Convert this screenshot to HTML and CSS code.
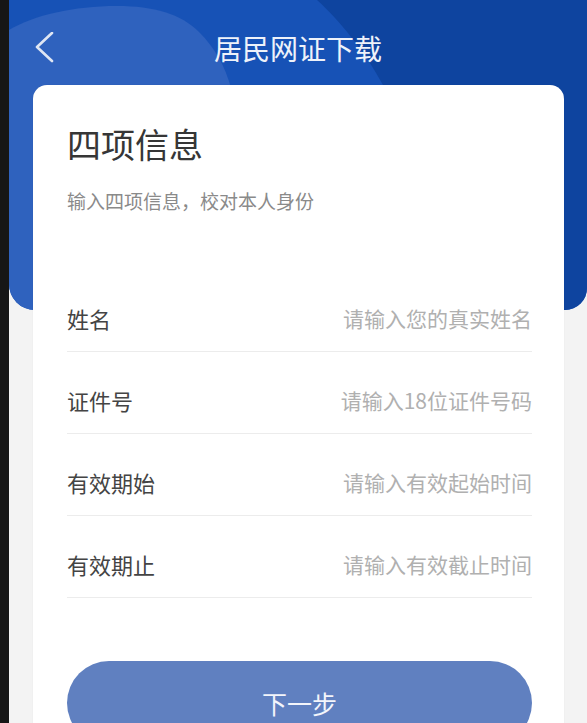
FILE: index.html
```html
<!DOCTYPE html>
<html lang="zh-CN">
<head>
<meta charset="utf-8">
<title>居民网证下载</title>
<link rel="stylesheet" href="styles.css">
</head>
<body>
<div class="device">
  <div class="bezel"></div>
  <div class="screen">
    <header class="header">
      <svg class="header-bg" viewBox="0 0 578 310" preserveAspectRatio="none" aria-hidden="true">
        <rect x="0" y="0" width="578" height="310" fill="#1752b6"/>
        <path d="M308 0 C330 20 355 50 374 85 L420 310 L578 310 L578 0 Z" fill="#0e449f"/>
        <path d="M0 30 C25 15 65 6 108 6 C145 6 172 14 190 32 C206 48 216 66 222 88 L230 310 L0 310 Z" fill="#2f62be"/>
      </svg>
      <nav class="nav">
        <button class="back" aria-label="返回">
          <svg width="20" height="32" viewBox="0 0 20 32"><path d="M17 1 L2 15 L17 29" fill="none" stroke="#dfe6f3" stroke-width="2.6" stroke-linecap="round" stroke-linejoin="round"/></svg>
        </button>
        <h1 class="nav-title">居民网证下载</h1>
        <span class="nav-spacer"></span>
      </nav>
    </header>
    <main class="card">
      <h2 class="card-title">四项信息</h2>
      <p class="card-sub">输入四项信息，校对本人身份</p>
      <form class="form">
        <label class="row"><span class="label">姓名</span><input class="field" placeholder="请输入您的真实姓名"></label>
        <label class="row"><span class="label">证件号</span><input class="field" placeholder="请输入18位证件号码"></label>
        <label class="row"><span class="label">有效期始</span><input class="field" placeholder="请输入有效起始时间"></label>
        <label class="row"><span class="label">有效期止</span><input class="field" placeholder="请输入有效截止时间"></label>
        <button type="button" class="next">下一步</button>
      </form>
    </main>
  </div>
</div>
</body>
</html>
```
FILE: styles.css
```css
* { box-sizing: border-box; }
html, body {
  margin: 0;
  height: 723px;
  overflow: hidden;
  font-family: "Noto Sans CJK SC", "Noto Sans", sans-serif;
  background: #f3f3f3;
}
.device {
  display: flex;
  height: 723px;
}
.bezel {
  width: 9px;
  flex: none;
  background: #161616;
}
.screen {
  flex: 1;
  background: #f3f3f3;
  overflow: hidden;
}
.header {
  display: grid;
  height: 310px;
  border-radius: 0 0 22px 26px;
  overflow: hidden;
}
.header > * { grid-area: 1 / 1; }
.header-bg {
  width: 100%;
  height: 100%;
  display: block;
}
.nav {
  align-self: start;
  height: 95px;
  display: grid;
  grid-template-columns: 1fr auto 1fr;
  align-items: center;
}
.back {
  justify-self: start;
  margin-left: 26px;
  padding: 0;
  border: 0;
  background: none;
  width: 20px;
  height: 32px;
  display: flex;
}
.nav-title {
  margin: 0;
  font-size: 28px;
  font-weight: 400;
  line-height: 36px;
  color: #eef2fa;
}
.card {
  position: relative;
  z-index: 1;
  margin: -225px 23px 0 24px;
  background: #fff;
  border-radius: 14px;
  padding: 39px 32px 40px 34px;
  box-shadow: 0 0 1px rgba(0, 0, 0, 0.12);
}
.card-title {
  margin: 0;
  font-size: 34px;
  line-height: 40px;
  font-weight: 400;
  color: #363636;
}
.card-sub {
  margin: 25px 0 0;
  font-size: 19px;
  line-height: 24px;
  color: #8a8a8a;
}
.form {
  margin-top: 57px;
  display: flex;
  flex-direction: column;
}
.row {
  display: flex;
  align-items: center;
  justify-content: space-between;
  padding: 33px 0 18px;
  border-bottom: 1px solid #ececec;
  line-height: 30px;
}
.label {
  font-size: 22px;
  color: #444;
  flex: none;
}
.field {
  flex: 1;
  min-width: 0;
  border: 0;
  padding: 0;
  margin: 0;
  height: 30px;
  background: transparent;
  outline: none;
  text-align: right;
  font-family: inherit;
  font-size: 21px;
  color: #333;
}
.field::placeholder { color: #b0b0b0; }
.next {
  margin-top: 63px;
  height: 84px;
  border: 0;
  border-radius: 42px;
  background: #6080c0;
  color: #f3f5fb;
  font-family: inherit;
  font-size: 25px;
  line-height: 30px;
  padding: 0;
}
```
